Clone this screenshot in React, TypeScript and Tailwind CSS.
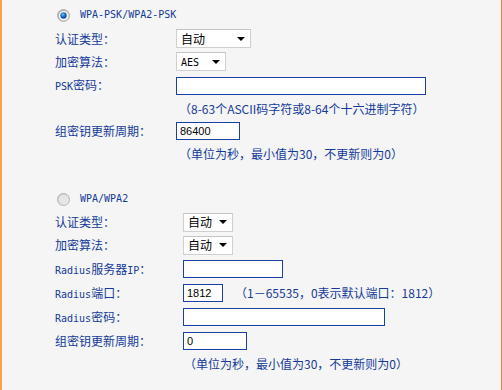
import type { ReactNode } from "react";

function A({ children }: { children: ReactNode }) {
  return <span className="font-['DejaVu_Sans_Mono',monospace] text-[10px]">{children}</span>;
}

function Radio({ checked }: { checked?: boolean }) {
  return (
    <svg width="13" height="13" viewBox="0 0 13 13" className="shrink-0">
      <defs>
        <linearGradient id={checked ? "rc" : "ru"} x1="0" y1="0" x2="1" y2="1">
          <stop offset="0" stopColor={checked ? "#9a9a9a" : "#c4c4c4"} />
          <stop offset="1" stopColor={checked ? "#e8e8e8" : "#f2f2f2"} />
        </linearGradient>
        <radialGradient id="dot" cx="0.4" cy="0.35" r="0.7">
          <stop offset="0" stopColor="#7fc0f0" />
          <stop offset="0.5" stopColor="#1e6cc0" />
          <stop offset="1" stopColor="#0b3a80" />
        </radialGradient>
      </defs>
      <circle cx="6.5" cy="6.5" r="6" fill={`url(#${checked ? "rc" : "ru"})`} stroke="#b4b4b4" strokeWidth="1" />
      <circle cx="6.5" cy="6.5" r="4.6" fill={checked ? "#ffffff" : "#e6e6e6"} />
      {checked && <circle cx="6.5" cy="6.5" r="3.2" fill="url(#dot)" />}
    </svg>
  );
}

function Select({ value, w }: { value: ReactNode; w: string }) {
  return (
    <div className={`flex h-[19px] items-center justify-between border border-[#d0d0d0] border-t-[#c4c4c4] bg-white pl-[4px] pr-[5px] text-black ${w}`}>
      <span>{value}</span>
      <span className="h-0 w-0 border-x-[4px] border-t-[4px] border-x-transparent border-t-black" />
    </div>
  );
}

function Input({ value, w }: { value?: string; w: string }) {
  return (
    <div className={`flex h-[18px] items-center border border-[#1a3fa6] bg-white pl-[3px] font-['Liberation_Sans',sans-serif] text-[11px] text-black ${w}`}>
      {value}
    </div>
  );
}

function Row({ label, h, lw, children }: { label: ReactNode; h: string; lw: string; children?: ReactNode }) {
  return (
    <div className={`flex items-center pl-[53px] ${h}`}>
      <div className={`shrink-0 ${lw}`}>{label}</div>
      {children}
    </div>
  );
}

export default function App() {
  return (
    <div className="h-[390px] w-[502px] overflow-hidden border-l-2 border-r border-l-[#f7a24a] border-r-[#f08a2c] bg-[#f5f5f5] font-['Noto_Sans_CJK_SC',sans-serif] text-[12px] leading-none text-[#143a9a]">
      <div className="flex flex-col pt-[3px]">
        <div className="flex h-[24px] items-center gap-[10px] pl-[55px]">
          <Radio checked />
          <A>WPA-PSK/WPA2-PSK</A>
        </div>
        <Row label="认证类型：" h="h-[23px]" lw="w-[121px]">
          <Select value="自动" w="w-[75px]" />
        </Row>
        <Row label="加密算法：" h="h-[23px]" lw="w-[121px]">
          <Select value={<A>AES</A>} w="w-[50px]" />
        </Row>
        <Row label={<><A>PSK</A>密码：</>} h="h-[25px]" lw="w-[121px]">
          <Input w="w-[250px]" />
        </Row>
        <div className="flex h-[21px] items-center pl-[177px]">（8-63个ASCII码字符或8-64个十六进制字符）</div>
        <Row label="组密钥更新周期：" h="h-[24px]" lw="w-[121px]">
          <Input value="86400" w="w-[64px]" />
        </Row>
        <div className="flex h-[22px] items-center pl-[177px]">（单位为秒，最小值为30，不更新则为0）</div>

        <div className="h-[22px]" />

        <div className="flex h-[24px] items-center gap-[10px] pl-[55px]">
          <Radio />
          <A>WPA/WPA2</A>
        </div>
        <Row label="认证类型：" h="h-[22px]" lw="w-[128px]">
          <Select value="自动" w="w-[50px]" />
        </Row>
        <Row label="加密算法：" h="h-[24px]" lw="w-[128px]">
          <Select value="自动" w="w-[50px]" />
        </Row>
        <Row label={<><A>Radius</A>服务器<A>IP</A>：</>} h="h-[24px]" lw="w-[128px]">
          <Input w="w-[100px]" />
        </Row>
        <Row label={<><A>Radius</A>端口：</>} h="h-[24px]" lw="w-[128px]">
          <Input value="1812" w="w-[40px]" />
          <span className="ml-[12px]">（1－65535，0表示默认端口：1812）</span>
        </Row>
        <Row label={<><A>Radius</A>密码：</>} h="h-[24px]" lw="w-[128px]">
          <Input w="w-[202px]" />
        </Row>
        <Row label="组密钥更新周期：" h="h-[24px]" lw="w-[128px]">
          <Input value="0" w="w-[64px]" />
        </Row>
        <div className="flex h-[22px] items-center pl-[182px]">（单位为秒，最小值为30，不更新则为0）</div>
      </div>
    </div>
  );
}
